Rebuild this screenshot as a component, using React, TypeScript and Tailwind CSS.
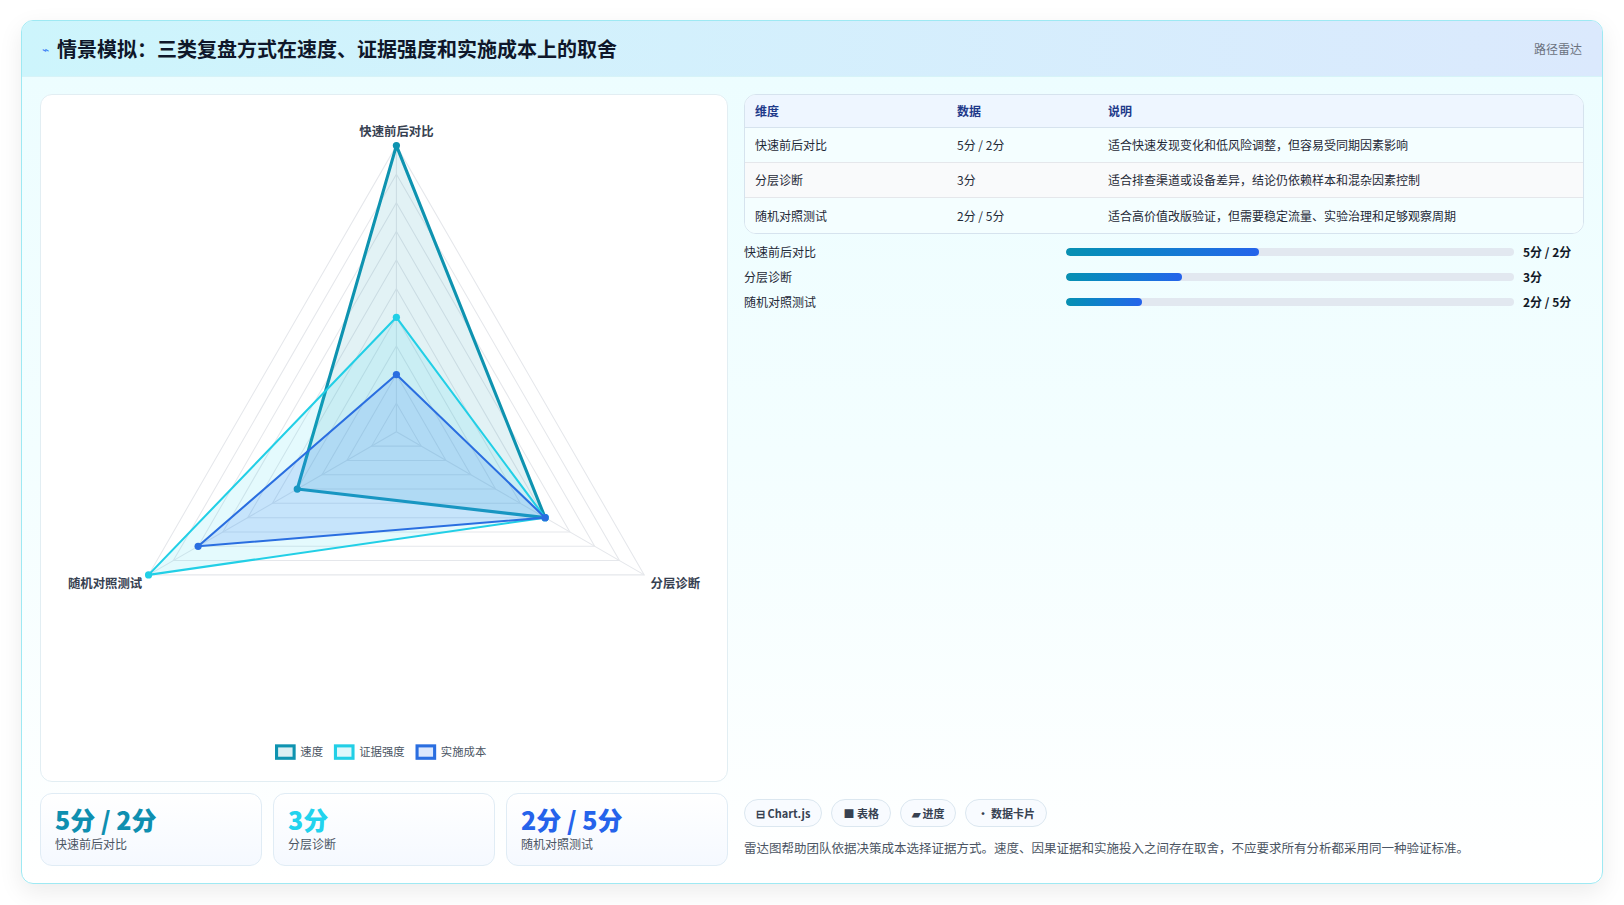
import React from "react";

const CX = 344, CY = 326, R = 277;
const ang = [-90, 30, 150].map((a) => (a * Math.PI) / 180);
const pt = (i: number, v: number) => [CX + Math.cos(ang[i]) * R * (v / 5), CY + Math.sin(ang[i]) * R * (v / 5)];
const poly = (vals: number[]) => vals.map((v, i) => pt(i, v).join(",")).join(" ");

const series = [
  { vals: [5, 3, 2], stroke: "#0e93b0", fill: "rgba(14,147,176,0.12)", w: 3 },
  { vals: [2, 3, 5], stroke: "#22cfe6", fill: "rgba(34,211,238,0.12)", w: 2 },
  { vals: [1, 3, 4], stroke: "#2a6ee0", fill: "rgba(59,130,246,0.18)", w: 2 },
];

function Radar() {
  const rings = [0.5, 1, 1.5, 2, 2.5, 3, 3.5, 4, 4.5, 5];
  return (
    <svg viewBox="0 0 664 664" className="w-full h-full">
      {rings.map((r) => (
        <polygon key={r} points={poly([r, r, r])} fill="none" stroke="#e5e7eb" strokeWidth={1} />
      ))}
      {[0, 1, 2].map((i) => {
        const [x, y] = pt(i, 5);
        return <line key={i} x1={CX} y1={CY} x2={x} y2={y} stroke="#e5e7eb" />;
      })}
      {series.map((s, k) => (
        <g key={k}>
          <polygon points={poly(s.vals)} fill={s.fill} stroke={s.stroke} strokeWidth={s.w} strokeLinejoin="round" />
          {s.vals.map((v, i) => {
            const [x, y] = pt(i, v);
            return <circle key={i} cx={x} cy={y} r={3.5} fill={s.stroke} />;
          })}
        </g>
      ))}
      <text x={344} y={40} textAnchor="middle" fontSize={12} fill="#374151" fontWeight={600}>快速前后对比</text>
      <text x={62} y={477} textAnchor="middle" fontSize={12} fill="#374151" fontWeight={600}>随机对照测试</text>
      <text x={614} y={477} textAnchor="middle" fontSize={12} fill="#374151" fontWeight={600}>分层诊断</text>
      {[
        { x: 228, label: "速度", s: "#0e93b0", f: "rgba(14,147,176,0.15)" },
        { x: 285, label: "证据强度", s: "#22cfe6", f: "rgba(34,211,238,0.15)" },
        { x: 364, label: "实施成本", s: "#2a6ee0", f: "rgba(59,130,246,0.18)" },
      ].map((l) => (
        <g key={l.label}>
          <rect x={l.x} y={630} width={17} height={12} fill={l.f} stroke={l.s} strokeWidth={3} />
          <text x={l.x + 23} y={640} fontSize={11} fill="#4b5563">{l.label}</text>
        </g>
      ))}
    </svg>
  );
}

const rows = [
  ["快速前后对比", "5分 / 2分", "适合快速发现变化和低风险调整，但容易受同期因素影响"],
  ["分层诊断", "3分", "适合排查渠道或设备差异，结论仍依赖样本和混杂因素控制"],
  ["随机对照测试", "2分 / 5分", "适合高价值改版验证，但需要稳定流量、实验治理和足够观察周期"],
];
const bars = [
  ["快速前后对比", 43, "5分 / 2分"],
  ["分层诊断", 26, "3分"],
  ["随机对照测试", 17, "2分 / 5分"],
] as const;

export default function App() {
  return (
    <div className="w-[1624px] h-[905px] bg-white pt-[20px] pl-[21px]" style={{ fontFamily: '"Noto Sans CJK SC","Noto Sans",sans-serif' }}>
      <div className="w-[1582px] h-[864px] rounded-xl border border-[#9ee9f3] overflow-hidden flex flex-col shadow-[0_8px_24px_rgba(0,0,0,0.08)] bg-gradient-to-b from-[#ecfdff] via-[#f3feff] to-white">
        <div className="h-[56px] shrink-0 flex items-center justify-between px-5 bg-gradient-to-r from-[#cdf5fc] to-[#dbe9fd] border-b border-[#d6f3f8]">
          <div className="flex items-center gap-2">
            <span className="text-[#3b82f6] text-xs">⌁</span>
            <span className="text-[20px] font-bold text-[#0f172a]">情景模拟：三类复盘方式在速度、证据强度和实施成本上的取舍</span>
          </div>
          <span className="text-xs text-[#6b7280]">路径雷达</span>
        </div>
        <div className="flex-1 flex gap-4 px-[18px] pt-[17px] pb-[18px]">
          <div className="w-[688px] flex flex-col gap-[11px]">
            <div className="h-[688px] bg-white rounded-xl border border-[#e2eef3]">
              <Radar />
            </div>
            <div className="flex gap-[11px] h-[73px]">
              {[
                ["5分 / 2分", "text-[#0e8fb0]", "快速前后对比"],
                ["3分", "text-[#22d3ee]", "分层诊断"],
                ["2分 / 5分", "text-[#2563eb]", "随机对照测试"],
              ].map(([n, c, l]) => (
                <div key={l} className="flex-1 rounded-xl border border-[#e0ecf5] bg-gradient-to-b from-white to-[#f5f9ff] px-[14px] pt-[10px]">
                  <div className={`text-[25px] leading-[30px] font-extrabold ${c}`}>{n}</div>
                  <div className="text-xs text-[#4b5563] mt-[2px]">{l}</div>
                </div>
              ))}
            </div>
          </div>
          <div className="flex-1 flex flex-col">
            <div className="rounded-xl border border-[#d6e3ee] overflow-hidden bg-white">
              <div className="grid grid-cols-[202px_151px_1fr] h-[33px] items-center px-[10px] bg-[#eef6ff] text-xs font-semibold text-[#1e3a8a] border-b border-[#d6e3ee]">
                <span>维度</span><span>数据</span><span>说明</span>
              </div>
              {rows.map((r, i) => (
                <div key={i} className={`grid grid-cols-[202px_151px_1fr] h-[35px] items-center px-[10px] text-xs text-[#1f2937] ${i < 2 ? "border-b border-[#e5e7eb]" : ""} ${i === 1 ? "bg-[#f9fafb]" : "bg-[#f4feff]"}`}>
                  <span>{r[0]}</span><span>{r[1]}</span><span>{r[2]}</span>
                </div>
              ))}
            </div>
            <div className="flex flex-col mt-[5px]">
              {bars.map(([l, w, v]) => (
                <div key={l} className="flex items-center h-[25px] text-xs">
                  <span className="w-[322px] text-[#1f2937]">{l}</span>
                  <div className="w-[448px] h-[8px] rounded-full bg-[#e2e8f0] overflow-hidden">
                    <div className="h-full rounded-full bg-gradient-to-r from-[#0891b2] to-[#2563eb]" style={{ width: `${w}%` }} />
                  </div>
                  <span className="ml-[9px] font-bold text-[#111827]">{v}</span>
                </div>
              ))}
            </div>
            <div className="flex-1" />
            <div className="flex gap-[9px] mb-[12px]">
              {["⊟ Chart.js", "■ 表格", "▰ 进度", "• 数据卡片"].map((c) => (
                <span key={c} className="h-[28px] px-[11px] rounded-full border border-[#dbe7f0] bg-[#f8fbff] flex items-center text-[11px] font-semibold text-[#374151]">{c}</span>
              ))}
            </div>
            <div className="text-[12.5px] text-[#4b5563] mb-[8px]">雷达图帮助团队依据决策成本选择证据方式。速度、因果证据和实施投入之间存在取舍，不应要求所有分析都采用同一种验证标准。</div>
          </div>
        </div>
      </div>
    </div>
  );
}
